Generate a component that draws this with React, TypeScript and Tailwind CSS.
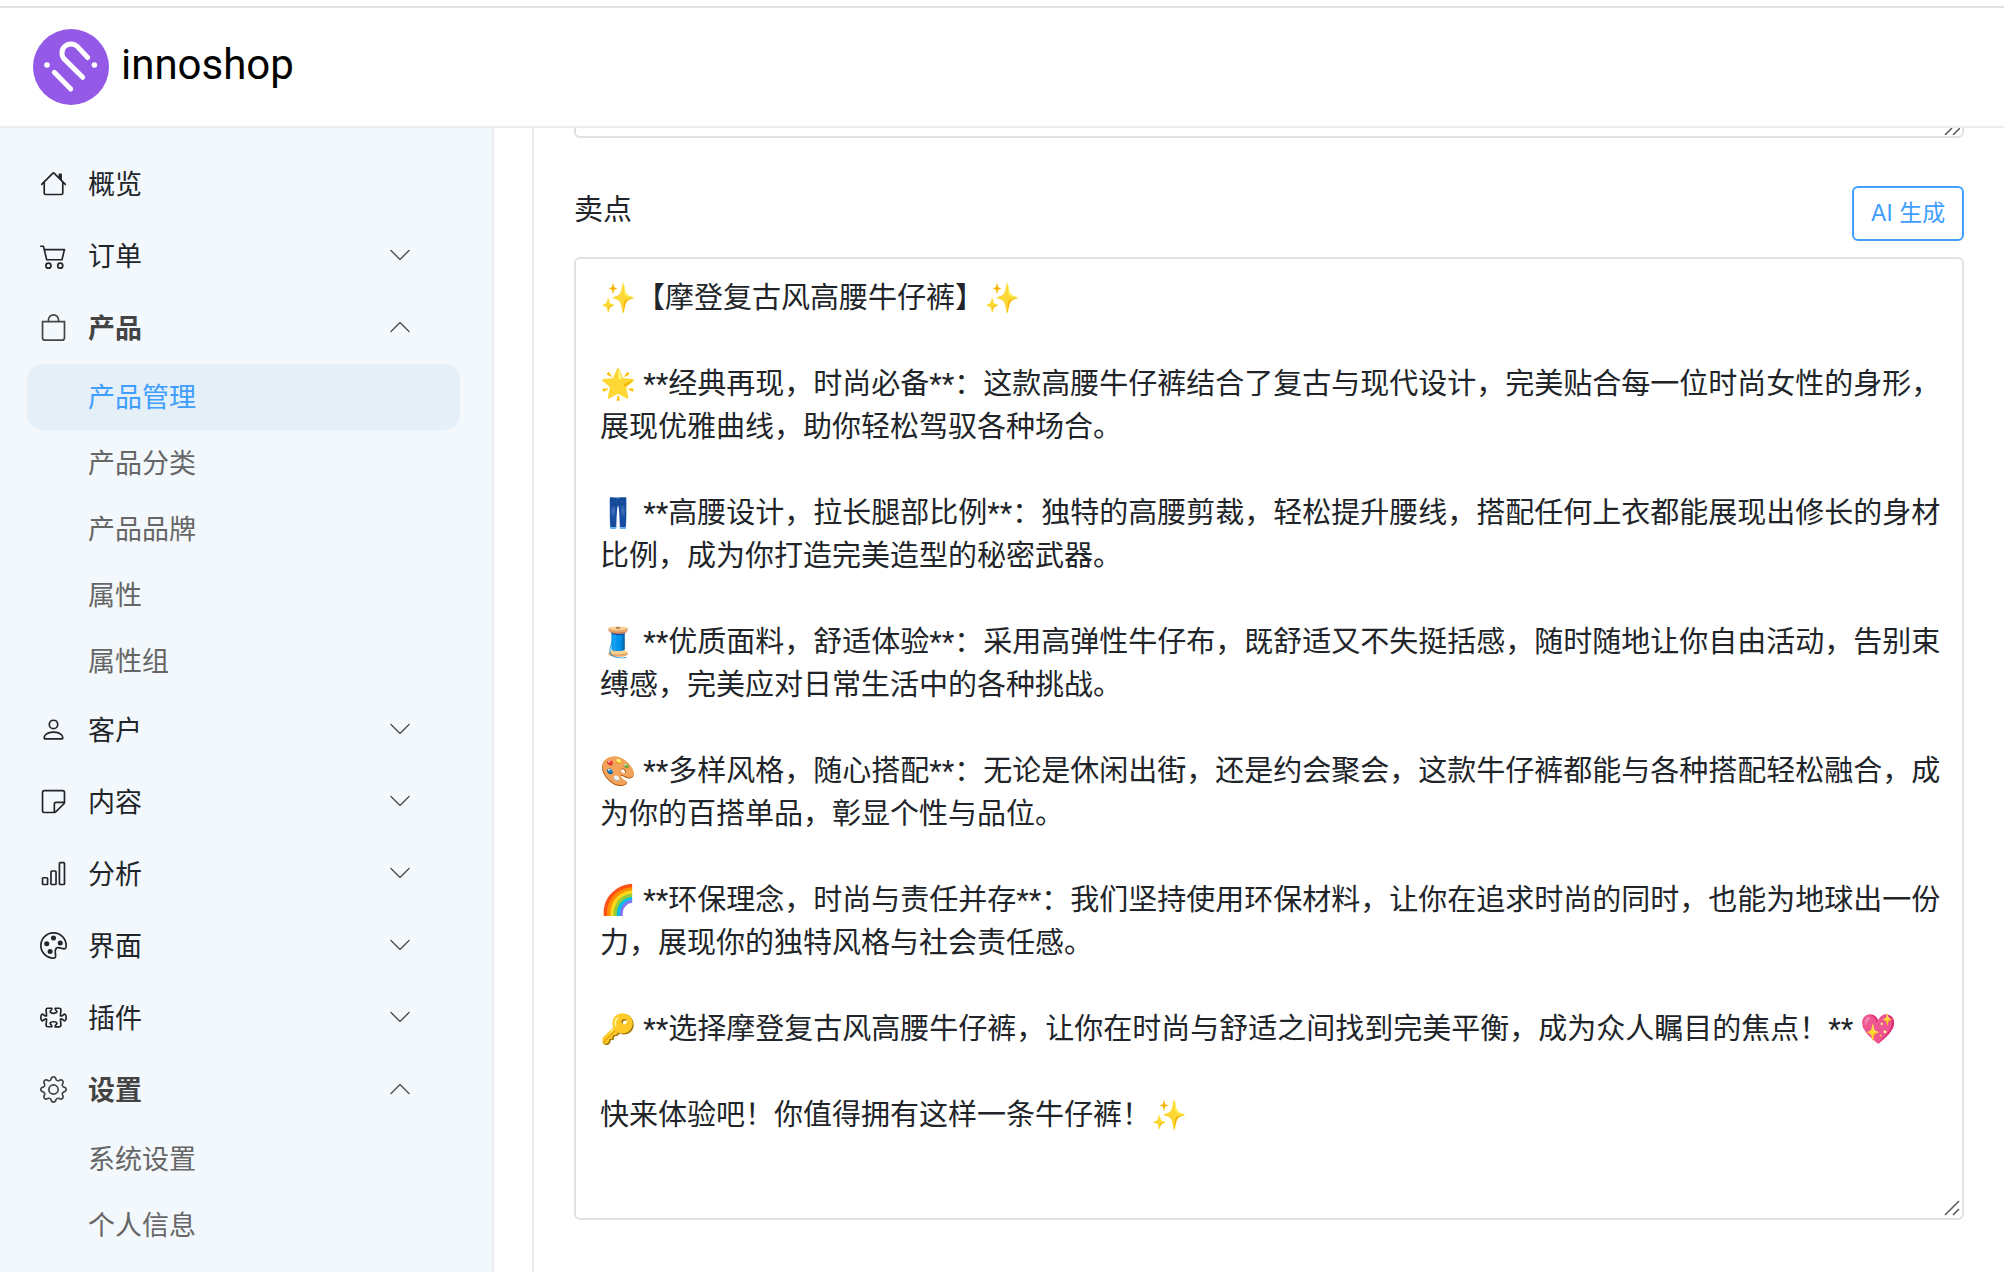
import { useState } from 'react'
import type { IconType } from 'react-icons'
import {
  BsBag,
  BsBarChart,
  BsCart2,
  BsChevronDown,
  BsChevronUp,
  BsGear,
  BsHouse,
  BsPalette,
  BsPerson,
  BsPuzzle,
  BsSticky
} from 'react-icons/bs'

interface MenuItem {
  title: string
  icon: IconType
  children?: string[]
  open?: boolean
}

const menus: MenuItem[] = [
  { title: '概览', icon: BsHouse },
  { title: '订单', icon: BsCart2, children: [] },
  {
    title: '产品',
    icon: BsBag,
    open: true,
    children: ['产品管理', '产品分类', '产品品牌', '属性', '属性组']
  },
  { title: '客户', icon: BsPerson, children: [] },
  { title: '内容', icon: BsSticky, children: [] },
  { title: '分析', icon: BsBarChart, children: [] },
  { title: '界面', icon: BsPalette, children: [] },
  { title: '插件', icon: BsPuzzle, children: [] },
  { title: '设置', icon: BsGear, open: true, children: ['系统设置', '个人信息'] }
]

const defaultSellingPoint = `✨【摩登复古风高腰牛仔裤】✨

🌟 **经典再现，时尚必备**：这款高腰牛仔裤结合了复古与现代设计，完美贴合每一位时尚女性的身形，展现优雅曲线，助你轻松驾驭各种场合。

👖 **高腰设计，拉长腿部比例**：独特的高腰剪裁，轻松提升腰线，搭配任何上衣都能展现出修长的身材比例，成为你打造完美造型的秘密武器。

🧵 **优质面料，舒适体验**：采用高弹性牛仔布，既舒适又不失挺括感，随时随地让你自由活动，告别束缚感，完美应对日常生活中的各种挑战。

🎨 **多样风格，随心搭配**：无论是休闲出街，还是约会聚会，这款牛仔裤都能与各种搭配轻松融合，成为你的百搭单品，彰显个性与品位。

🌈 **环保理念，时尚与责任并存**：我们坚持使用环保材料，让你在追求时尚的同时，也能为地球出一份力，展现你的独特风格与社会责任感。

🔑 **选择摩登复古风高腰牛仔裤，让你在时尚与舒适之间找到完美平衡，成为众人瞩目的焦点！** 💖

快来体验吧！你值得拥有这样一条牛仔裤！✨`

function Logo() {
  return (
    <a href="#" className="flex items-start gap-3">
      <svg className="size-[76px]" viewBox="0 0 76 76" fill="none" aria-hidden="true">
        <circle cx="38" cy="38" r="38" fill="#9459e6" />
        <g stroke="#fff" strokeWidth="5" strokeLinecap="round" strokeLinejoin="round">
          <path d="M21.3 43.3 37.7 60" />
          <path d="M49.7 48.3 31.6 30.4A9 9 0 0 1 44.4 17.6L54.7 28.5" />
        </g>
        <circle cx="14" cy="36" r="2.8" fill="#fff" />
        <circle cx="61.4" cy="36" r="2.8" fill="#fff" />
      </svg>
      <span className="font-['Roboto',sans-serif] text-[42px] leading-[72px] text-black">innoshop</span>
    </a>
  )
}

function ResizeGrip() {
  return (
    <svg
      className="pointer-events-none absolute right-1 bottom-1 size-4"
      viewBox="0 0 16 16"
      fill="none"
      stroke="#555"
      strokeWidth="1.5"
      aria-hidden="true"
    >
      <path d="M1 15 15 1M9 15l6-6" />
    </svg>
  )
}

function Sidebar() {
  const [active, setActive] = useState('产品管理')
  const [opened, setOpened] = useState(menus.filter((m) => m.open).map((m) => m.title))

  const toggle = (title: string) => {
    setOpened((prev) => (prev.includes(title) ? prev.filter((t) => t !== title) : [...prev, title]))
  }

  return (
    <aside className="w-[494px] shrink-0 border-r-2 border-[#ebeff5] bg-[#f3f8fc] pt-5 pr-8 pl-[27px]">
      <nav>
        <ul>
          {menus.map((menu) => {
            const isOpen = opened.includes(menu.title)
            const Icon = menu.icon
            const Chevron = isOpen ? BsChevronUp : BsChevronDown
            return (
              <li key={menu.title}>
                <button
                  type="button"
                  onClick={() => toggle(menu.title)}
                  className={`flex h-[72px] w-full items-center pt-0.5 pr-12 pl-[13px] text-[27px] ${
                    isOpen ? 'font-bold text-[#444]' : 'text-[#212529]'
                  }`}
                >
                  <Icon className="mr-[21px] mb-1 size-[27px]" />
                  {menu.title}
                  {menu.children && <Chevron className="mb-1 ml-auto size-6 text-[#555]" />}
                </button>
                {isOpen && menu.children && (
                  <ul>
                    {menu.children.map((child) => (
                      <li key={child}>
                        <a
                          href="#"
                          onClick={() => setActive(child)}
                          className={`flex h-[66px] items-center rounded-2xl pt-0.5 pl-[61px] text-[27px] ${
                            active === child ? 'bg-[#e4eff8] text-[#409eff]' : 'text-[#666]'
                          }`}
                        >
                          {child}
                        </a>
                      </li>
                    ))}
                  </ul>
                )}
              </li>
            )
          })}
        </ul>
      </nav>
    </aside>
  )
}

export default function App() {
  const [sellingPoint, setSellingPoint] = useState(defaultSellingPoint)

  return (
    <div className="flex min-h-screen flex-col bg-white font-['Inter','Noto_Sans_CJK_SC',sans-serif] text-[#212529]">
      <header className="border-b-2 border-[#ececec] pt-[6px]">
        <div className="border-t-2 border-[#e1e1e1] px-[33px] pt-[21px] pb-[21px]">
          <Logo />
        </div>
      </header>

      <div className="flex flex-1">
        <Sidebar />
        <main className="flex min-w-0 flex-1 pl-[38px]">
          <div className="min-w-0 flex-1 border-l-2 border-[#ebebeb] pr-10 pl-10">
            <div className="relative">
              <textarea
                aria-label="摘要"
                className="block h-[10px] w-full resize-none overflow-hidden rounded-b-md border-2 border-t-0 border-[#dee2e6]"
              />
              <svg
                className="pointer-events-none absolute right-1 bottom-[3px] h-[7px] w-4"
                viewBox="0 0 16 7"
                fill="none"
                stroke="#555"
                strokeWidth="1.5"
                aria-hidden="true"
              >
                <path d="M1 7 8 0M9 7l7-7" />
              </svg>
            </div>

            <div className="mt-12 flex items-start justify-between">
              <label htmlFor="selling-point" className="text-[29px] leading-[48px]">
                卖点
              </label>
              <button
                type="button"
                className="h-[55px] w-28 rounded-md border-2 border-[#409eff] text-[23px] text-[#409eff]"
              >
                AI 生成
              </button>
            </div>

            <div className="relative mt-4">
              <textarea
                id="selling-point"
                value={sellingPoint}
                onChange={(e) => setSellingPoint(e.target.value)}
                spellCheck={false}
                className="block h-[963px] w-full resize-none overflow-hidden rounded-md border-2 border-[#dee2e6] pt-[18px] pr-3 pb-4 pl-6 font-['Roboto','Noto_Sans_CJK_SC',sans-serif] text-[29px] leading-[43px]"
              />
              <ResizeGrip />
            </div>
          </div>
        </main>
      </div>
    </div>
  )
}
